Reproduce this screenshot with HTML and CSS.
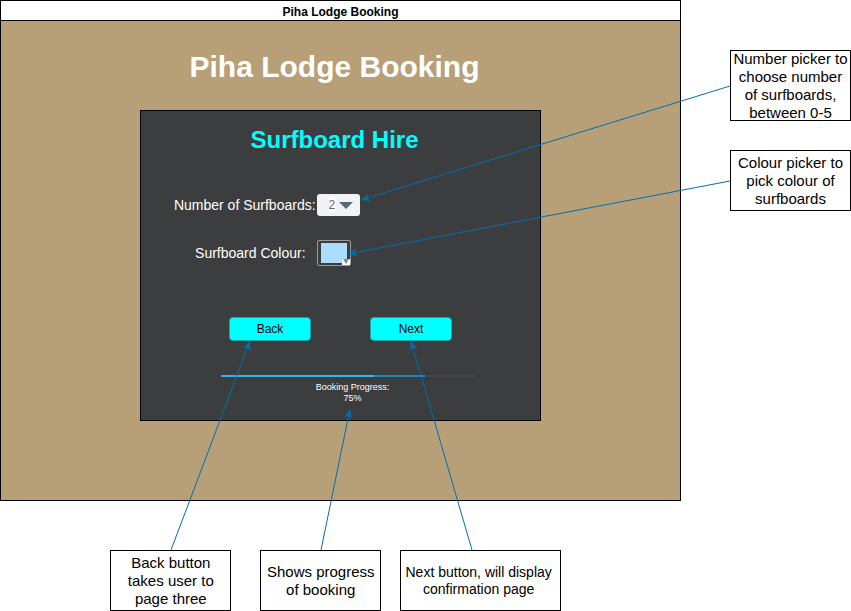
FILE: index.html
```html
<!DOCTYPE html>
<html lang="en">
<head>
<meta charset="utf-8">
<meta name="viewport" content="width=device-width, initial-scale=1">
<title>Piha Lodge Booking</title>
<link rel="stylesheet" href="styles.css">
</head>
<body>
<div class="board">
  <main class="window">
    <header class="titlebar">Piha Lodge Booking</header>
    <div class="screen">
      <h1 class="title">Piha Lodge Booking</h1>
      <form class="panel">
        <h2 class="heading">Surfboard Hire</h2>
        <div class="fields">
          <label class="label" for="count">Number of Surfboards:</label>
          <span class="picker">
            <select class="count" id="count">
              <option>0</option><option>1</option><option selected>2</option><option>3</option><option>4</option><option>5</option>
            </select>
            <svg class="caret" viewBox="0 0 14 7" aria-hidden="true"><path d="M0 0H14L7 7Z"/></svg>
          </span>
          <label class="label label-short" for="colour">Surfboard Colour:</label>
          <span class="picker">
            <input class="colour" id="colour" type="color" value="#aaddff">
            <svg class="badge" viewBox="0 0 8 6" aria-hidden="true"><path fill="#fff" d="M0 0H8V6H0Z"/><path fill="#888" d="M1 0H7L4 5Z"/></svg>
          </span>
        </div>
        <div class="actions">
          <button class="button" type="button">Back</button>
          <button class="button" type="button">Next</button>
        </div>
        <progress class="progress" id="progress" value="80" max="100"></progress>
        <label class="caption" for="progress">Booking Progress:<br>75%</label>
      </form>
    </div>
  </main>
  <aside class="notes-side">
    <p class="note note-tall">Number picker to choose number of surfboards, between 0-5</p>
    <p class="note">Colour picker to pick colour of surfboards</p>
  </aside>
  <footer class="notes-bottom">
    <p class="note">Back button takes user to page three</p>
    <p class="note">Shows progress of booking</p>
    <p class="note note-wide">Next button, will display confirmation page</p>
  </footer>
  <svg class="arrows" viewBox="0 0 851 611" preserveAspectRatio="none" aria-hidden="true">
    <defs>
      <marker id="head" markerUnits="userSpaceOnUse" markerWidth="10" markerHeight="10" refX="9" refY="5" orient="auto">
        <path d="M9 5L0 9L2 5L0 1Z" fill="#006eaf"/>
      </marker>
    </defs>
    <g stroke="#006eaf" fill="none">
      <path marker-end="url(#head)" d="M730 86L361 200"/>
      <path marker-end="url(#head)" d="M730 181L348 254"/>
      <path marker-end="url(#head)" d="M171 550L250 341"/>
      <path marker-end="url(#head)" d="M321 550L350 409"/>
      <path marker-end="url(#head)" d="M472 550L411 341"/>
    </g>
  </svg>
</div>
</body>
</html>
```
FILE: styles.css
```css
* {
  box-sizing: border-box;
}

body {
  margin: 0;
  background: #fff;
  color: #000;
  font-family: "Liberation Sans", Arial, sans-serif;
}

.board {
  position: relative;
  display: grid;
  grid-template-columns: 681fr 49fr 121fr;
  row-gap: 49px;
}

.window {
  grid-column: 1;
  border: 1px solid #000;
  background: #b7a077;
}

.titlebar {
  height: 20px;
  padding-top: 2px;
  border-bottom: 1px solid #000;
  background: #fff;
  font-size: 12px;
  font-weight: bold;
  line-height: 18px;
  text-align: center;
}

.screen {
  padding: 26px 0 79px;
}

.title {
  margin: 0 12px 23px 0;
  color: #fff;
  font-size: 30px;
  line-height: 40px;
  text-align: center;
}

.panel {
  display: flex;
  flex-direction: column;
  width: 59%;
  margin: 0 auto;
  padding: 14px 0 16px;
  border: 1px solid #000;
  background: #3c3d3f;
  color: #fff;
}

.heading {
  margin: 0 12px 38px 0;
  color: #0ff;
  font-size: 24px;
  line-height: 30px;
  text-align: center;
}

.fields {
  display: grid;
  grid-template-columns: 44% 1fr;
  grid-template-rows: 24px 26px;
  row-gap: 23px;
  align-items: center;
}

.label {
  padding-right: 1px;
  font-size: 14px;
  line-height: 18px;
  text-align: right;
  white-space: nowrap;
}

.label-short {
  padding-right: 11px;
}

.picker {
  position: relative;
  justify-self: start;
  display: flex;
}

.count {
  appearance: none;
  width: 43px;
  height: 22px;
  padding: 0 12px;
  border: 0;
  border-radius: 3px;
  background: linear-gradient(#fff, #fff) 12px 3px / 7px 15px no-repeat #f0f2f5;
  color: #596780;
  font: 12px/22px "Liberation Sans", Arial, sans-serif;
}

.caret {
  position: absolute;
  top: 8px;
  right: 7px;
  width: 14px;
  height: 7px;
  fill: #596780;
  pointer-events: none;
}

.colour {
  appearance: none;
  width: 34px;
  height: 26px;
  padding: 2px 3px;
  border: 1px solid #999;
  border-radius: 2px;
  background: none;
}

.colour::-webkit-color-swatch-wrapper {
  padding: 0;
}

.colour::-webkit-color-swatch {
  border: 0;
}

.badge {
  position: absolute;
  right: 1px;
  bottom: 1px;
  width: 8px;
  height: 6px;
  pointer-events: none;
}

.actions {
  display: flex;
  justify-content: center;
  gap: 59px;
  margin-top: 51px;
}

.button {
  width: 82px;
  height: 24px;
  padding: 0;
  border: 1px solid #20a5a6;
  border-radius: 4px;
  background: #0ff;
  color: #000;
  font: 12px/20px "Liberation Sans", Arial, sans-serif;
}

.progress {
  appearance: none;
  width: 64%;
  height: 2px;
  margin: 34px 0 0 20%;
  border: 0;
}

.progress::-webkit-progress-bar {
  background: #454547;
}

.progress::-webkit-progress-value {
  background: linear-gradient(90deg, #33b5e5 75%, #2686ad 75%);
}

.caption {
  margin: 5px 0 0 24px;
  font-size: 9px;
  line-height: 11px;
  text-align: center;
}

.notes-side {
  grid-column: 3;
  display: flex;
  flex-direction: column;
  gap: 29px;
  padding-top: 50px;
}

.notes-bottom {
  grid-column: 1;
  display: grid;
  grid-template-columns: 150fr 140fr 161fr;
  padding: 0 17.6% 0 16.2%;
}

.note {
  display: flex;
  align-items: center;
  justify-content: center;
  min-height: 61px;
  margin: 0;
  border: 1px solid #000;
  background: #fff;
  font-size: 15px;
  line-height: 18px;
  text-align: center;
}

.note-tall {
  height: 71px;
}

.notes-bottom .note {
  width: 121px;
}

.notes-bottom .note-wide {
  width: 161px;
  padding-right: 4px;
  font-size: 14px;
  line-height: 17px;
}

.arrows {
  position: absolute;
  inset: 0;
  width: 100%;
  height: 100%;
  pointer-events: none;
}
```
